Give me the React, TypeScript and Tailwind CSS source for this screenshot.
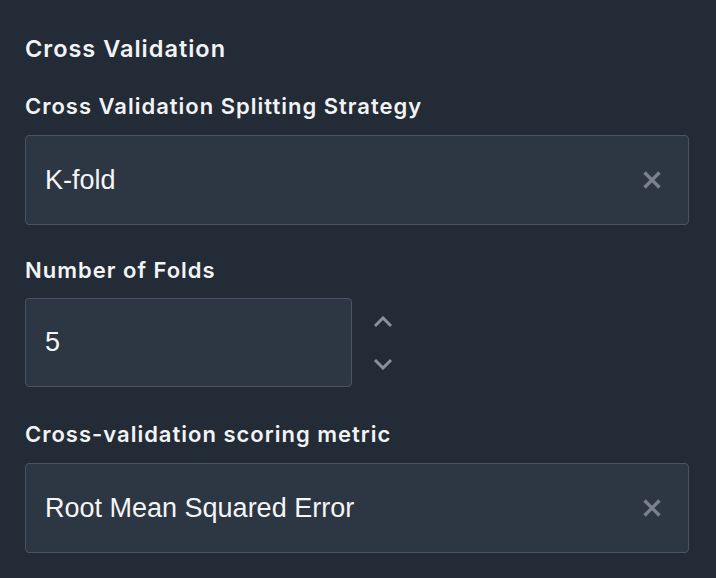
import React from "react";

const labelFont = { fontFamily: "Inter, 'Open Sans', sans-serif" };

function XIcon() {
  return (
    <svg width="18" height="18" viewBox="0 0 18 18" className="shrink-0">
      <path d="M1.5 1.5 L16.5 16.5 M16.5 1.5 L1.5 16.5" stroke="#7b828d" strokeWidth="3.2" strokeLinecap="butt" />
    </svg>
  );
}

function Chevron({ up }: { up?: boolean }) {
  return (
    <svg width="20" height="12" viewBox="0 0 20 12">
      {up ? (
        <path d="M2 10 L10 2 L18 10" stroke="#8a919b" strokeWidth="3" fill="none" />
      ) : (
        <path d="M2 2 L10 10 L18 2" stroke="#8a919b" strokeWidth="3" fill="none" />
      )}
    </svg>
  );
}

function Label({ children }: { children: React.ReactNode }) {
  return (
    <div
      className="h-[30px] flex items-center text-[22px] font-semibold tracking-[1px] text-[#f2f3f5] leading-none"
      style={labelFont}
    >
      {children}
    </div>
  );
}

function SelectBox({ value }: { value: string }) {
  return (
    <div className="h-[90px] w-[664px] rounded-[4px] border border-[#4a5361] bg-[#2d3643] flex items-center justify-between pl-[19px] pr-[27px]">
      <span className="text-[27px] text-[#f4f5f6]" style={{ fontFamily: "'Liberation Sans', Arial, sans-serif" }}>
        {value}
      </span>
      <XIcon />
    </div>
  );
}

export default function App() {
  return (
    <div className="w-[716px] h-[578px] bg-[#232b36] pl-[25px] pt-[34px] overflow-hidden">
      <div
        className="h-[30px] flex items-center text-[23.5px] font-semibold tracking-[1px] text-[#f2f3f5] leading-none"
        style={labelFont}
      >
        Cross Validation
      </div>
      <div className="mt-[27px]">
        <Label>Cross Validation Splitting Strategy</Label>
      </div>
      <div className="mt-[14px]">
        <SelectBox value="K-fold" />
      </div>
      <div className="mt-[30px]">
        <Label>Number of Folds</Label>
      </div>
      <div className="mt-[13px] flex items-center">
        <div className="h-[89px] w-[327px] rounded-[4px] border border-[#4a5361] bg-[#2d3643] flex items-center pl-[19px]">
          <span className="text-[27px] text-[#f4f5f6]" style={{ fontFamily: "'Liberation Sans', Arial, sans-serif" }}>
            5
          </span>
        </div>
        <div className="ml-[21px] flex flex-col items-center gap-[30px]">
          <Chevron up />
          <Chevron />
        </div>
      </div>
      <div className="mt-[32px]">
        <Label>Cross-validation scoring metric</Label>
      </div>
      <div className="mt-[14px]">
        <SelectBox value="Root Mean Squared Error" />
      </div>
    </div>
  );
}
